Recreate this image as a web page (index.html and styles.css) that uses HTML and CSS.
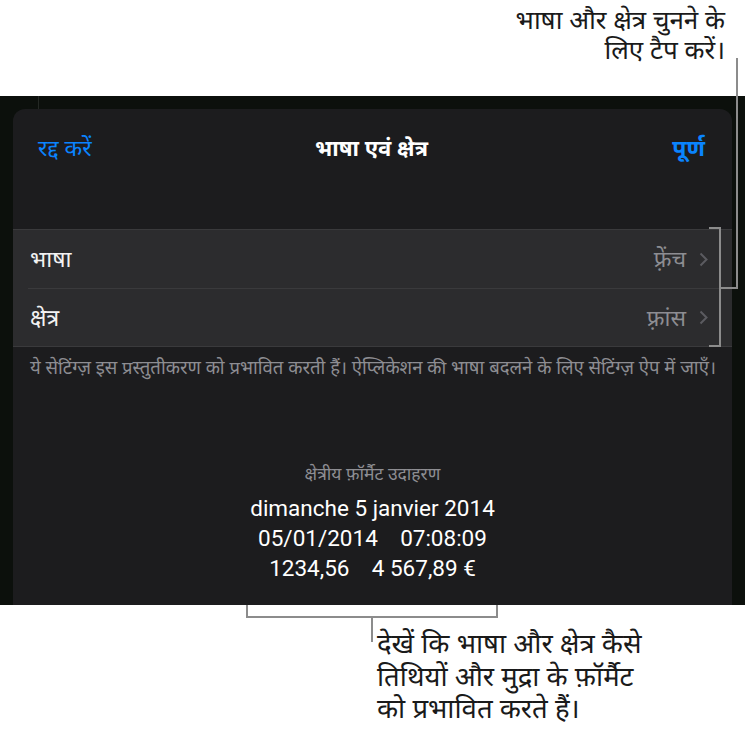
FILE: index.html
```html
<!DOCTYPE html>
<html lang="hi">
<head>
    <meta charset="UTF-8">
    <meta name="viewport" content="width=device-width, initial-scale=1.0">
    <title>भाषा एवं क्षेत्र</title>
    <link rel="stylesheet" href="styles.css">
</head>
<body>
<div class="page">
    <div class="callout-top">
        <p><span>भाषा और क्षेत्र चुनने के</span><span>लिए टैप करें।</span></p>
    </div>

    <div class="screen">
        <div class="screen-mark"></div>
        <div class="sheet">
            <div class="nav-bar">
                <span class="nav-cancel">रद्द करें</span>
                <span class="nav-title">भाषा एवं क्षेत्र</span>
                <span class="nav-done">पूर्ण</span>
            </div>

            <div class="settings-group">
                <div class="settings-row">
                    <span class="row-label">भाषा</span>
                    <span class="row-value">फ़्रेंच</span>
                    <svg class="chevron" viewBox="0 0 9 15"><path d="M1.5 1.5 L7.5 7.5 L1.5 13.5" /></svg>
                </div>
                <div class="settings-row">
                    <span class="row-label">क्षेत्र</span>
                    <span class="row-value">फ़्रांस</span>
                    <svg class="chevron" viewBox="0 0 9 15"><path d="M1.5 1.5 L7.5 7.5 L1.5 13.5" /></svg>
                </div>
            </div>
            <p class="group-footer">ये सेटिंग्ज़ इस प्रस्तुतीकरण को प्रभावित करती हैं। ऐप्लिकेशन की भाषा बदलने के लिए सेटिंग्ज़ ऐप में जाएँ।</p>

            <div class="format-example">
                <div class="format-title">क्षेत्रीय फ़ॉर्मैट उदाहरण</div>
                <div class="format-line">dimanche 5 janvier 2014</div>
                <div class="format-line">05/01/2014&nbsp;&nbsp;&nbsp;&nbsp;07:08:09</div>
                <div class="format-line">1234,56&nbsp;&nbsp;&nbsp;&nbsp;4 567,89 €</div>
            </div>
        </div>
    </div>

    <div class="callout-bottom">
        <p><span>देखें कि भाषा और क्षेत्र कैसे</span><span>तिथियों और मुद्रा के फ़ॉर्मैट</span><span>को प्रभावित करते हैं।</span></p>
    </div>

    <!-- callout lines -->
    <div class="line top-stem"></div>
    <div class="line top-link"></div>
    <div class="line top-bracket"></div>
    <div class="line bottom-bracket"></div>
    <div class="line bottom-stem"></div>
</div>
</body>
</html>
```

FILE: styles.css
```css
body {
    margin: 0;
    background-color: #fff;
    font-family: "Noto Sans", "Noto Sans Devanagari", sans-serif;
}
.page {
    position: relative;
    width: 745px;
    height: 734px;
    overflow: hidden;
}
.callout-top {
    height: 96px;
    display: flex;
    justify-content: flex-end;
}
.callout-top p {
    margin: 4px 20px 0 0;
    text-align: right;
    font-size: 26px;
    line-height: 30px;
    color: #1a1a1a;
}
.callout-top span,
.callout-bottom span {
    display: block;
}
.screen {
    position: relative;
    height: 509px;
    background-color: #0c100c;
    padding: 13px 13px 0;
    box-sizing: border-box;
    display: flex;
}
.screen-mark {
    position: absolute;
    left: 38px;
    top: 0;
    width: 1px;
    height: 13px;
    background-color: #242824;
}
.sheet {
    flex: 1;
    background-color: #1c1c1e;
    border-radius: 12px 12px 0 0;
    display: flex;
    flex-direction: column;
}
.nav-bar {
    height: 76px;
    padding: 0 27px 0 25px;
    display: flex;
    align-items: center;
    justify-content: space-between;
    font-size: 23px;
    line-height: 30px;
}
.nav-cancel {
    color: #0a84ff;
    width: 100px;
}
.nav-title {
    color: #fff;
    font-weight: bold;
    font-size: 22px;
}
.nav-done {
    color: #0a84ff;
    font-weight: bold;
    width: 100px;
    text-align: right;
}
.settings-group {
    margin-top: 44px;
    background-color: #2c2c2e;
    border-top: 1px solid #3a3a3c;
    border-bottom: 1px solid #3a3a3c;
}
.settings-row {
    height: 58px;
    margin-left: 15px;
    padding: 0 24px 0 2px;
    display: flex;
    align-items: center;
    font-size: 23px;
    line-height: 30px;
}
.settings-row + .settings-row {
    border-top: 1px solid #3a3a3c;
    height: 57px;
}
.row-label {
    flex: 1;
    color: #f2f2f2;
    margin-top: -2px;
}
.row-value {
    color: #8d8d92;
    margin-right: 13px;
    margin-top: -2px;
}
.chevron {
    width: 9px;
    height: 15px;
    fill: none;
    stroke: #5b5b60;
    stroke-width: 2;
}
.group-footer {
    margin: 10px 0 0 17px;
    font-size: 18.5px;
    line-height: 20px;
    color: #8d8d92;
    white-space: nowrap;
}
.format-example {
    margin-top: 86px;
    text-align: center;
    color: #fff;
}
.format-title {
    font-size: 17.5px;
    line-height: 20px;
    color: #8d8d92;
    margin-bottom: 10px;
}
.format-line {
    font-family: Roboto, "Liberation Sans", sans-serif;
    font-size: 22.5px;
    line-height: 30px;
}
.callout-bottom {
    padding: 22px 0 0 377px;
}
.callout-bottom p {
    margin: 0;
    font-size: 27.5px;
    line-height: 32.5px;
    color: #1a1a1a;
    white-space: nowrap;
}
.line {
    position: absolute;
    border-color: #8c8c8c;
    border-style: solid;
    border-width: 0;
}
.top-stem {
    left: 736px;
    top: 58px;
    width: 0;
    height: 231px;
    border-left-width: 2px;
}
.top-link {
    left: 719px;
    top: 287px;
    width: 19px;
    height: 0;
    border-top-width: 2px;
}
.top-bracket {
    left: 709px;
    top: 227px;
    width: 10px;
    height: 116px;
    border-width: 2px 2px 2px 0;
}
.bottom-bracket {
    left: 246px;
    top: 605px;
    width: 248px;
    height: 11px;
    border-width: 0 2px 2px 2px;
}
.bottom-stem {
    left: 371px;
    top: 617px;
    width: 0;
    height: 25px;
    border-left-width: 2px;
}
```
